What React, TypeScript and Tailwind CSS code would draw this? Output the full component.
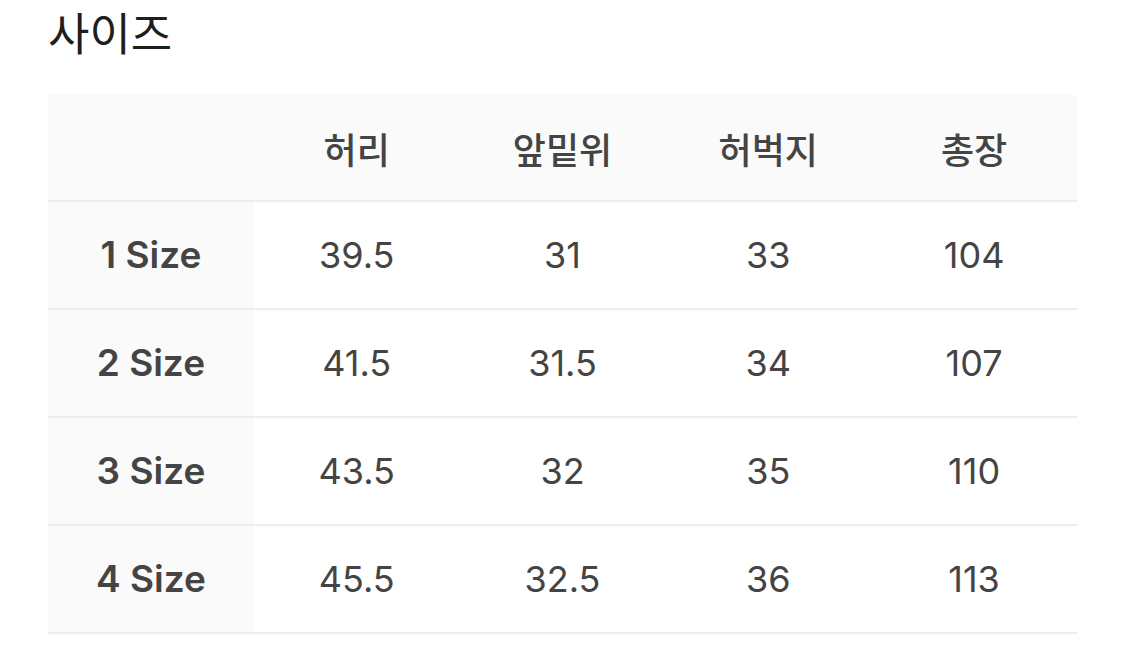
const headers = ["허리", "앞밑위", "허벅지", "총장"];

const rows = [
  { label: "1 Size", values: ["39.5", "31", "33", "104"] },
  { label: "2 Size", values: ["41.5", "31.5", "34", "107"] },
  { label: "3 Size", values: ["43.5", "32", "35", "110"] },
  { label: "4 Size", values: ["45.5", "32.5", "36", "113"] },
];

const ko = { fontFamily: '"Noto Sans CJK KR", "Noto Sans", sans-serif' };
const num = { fontFamily: 'Inter, "Liberation Sans", sans-serif' };

export default function App() {
  return (
    <div className="min-h-screen w-full bg-white pl-[48px] pr-[48px]">
      <h1
        className="text-[45px] leading-[64px] font-normal text-[#1e1e1e]"
        style={ko}
      >
        사이즈
      </h1>

      <div className="mt-[31px] w-[1029px]">
        {/* header */}
        <div className="grid grid-cols-5 h-[107px] bg-[#fafafa] border-b-2 border-[#eeeeee]">
          <div />
          {headers.map((h) => (
            <div
              key={h}
              className="flex items-center justify-center text-[36px] font-medium text-[#444]"
              style={ko}
            >
              {h}
            </div>
          ))}
        </div>

        {rows.map((r) => (
          <div
            key={r.label}
            className="grid grid-cols-5 h-[108px] border-b-2 border-[#eeeeee]"
          >
            <div
              className="flex items-center justify-center bg-[#fafafa] text-[37px] font-semibold text-[#444]"
              style={num}
            >
              {r.label}
            </div>
            {r.values.map((v, i) => (
              <div
                key={i}
                className="flex items-center justify-center text-[36px] text-[#444]"
                style={num}
              >
                {v}
              </div>
            ))}
          </div>
        ))}
      </div>
    </div>
  );
}
